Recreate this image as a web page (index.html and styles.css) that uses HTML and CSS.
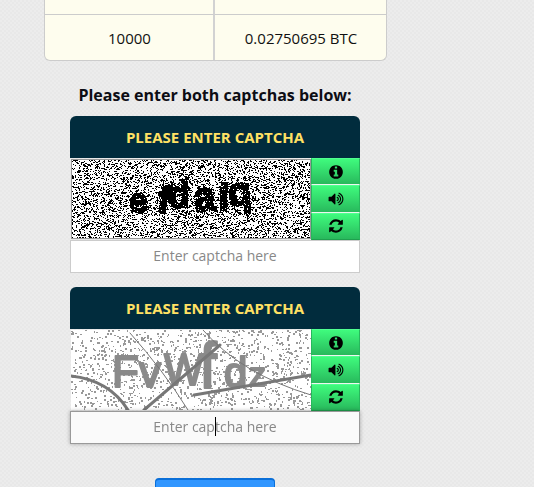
FILE: index.html
```html
<!DOCTYPE html>
<html lang="en">
<head>
    <meta charset="UTF-8">
    <meta name="viewport" content="width=device-width, initial-scale=1.0">
    <title>Enter captchas</title>
    <link rel="stylesheet" href="styles.css">
</head>
<body>

    <div class="content">
        <table class="rates">
            <tr class="cut-row">
                <td></td>
                <td></td>
            </tr>
            <tr>
                <td>10000</td>
                <td>0.02750695 BTC</td>
            </tr>
        </table>

        <h3 class="captcha-title">Please enter both captchas below:</h3>

        <div class="captcha-box">
            <div class="captcha-head">PLEASE ENTER CAPTCHA</div>
            <div class="captcha-body">
                <canvas id="captchaOne" class="captcha-img bordered" width="240" height="80"></canvas>
                <div class="captcha-btns">
                    <button class="captcha-btn">
                        <svg viewBox="0 0 1792 1792"><path d="M1152 1376v-160q0-14-9-23t-23-9h-96v-512q0-14-9-23t-23-9h-320q-14 0-23 9t-9 23v160q0 14 9 23t23 9h96v320h-96q-14 0-23 9t-9 23v160q0 14 9 23t23 9h448q14 0 23-9t9-23zm-128-896v-160q0-14-9-23t-23-9h-192q-14 0-23 9t-9 23v160q0 14 9 23t23 9h192q14 0 23-9t9-23zm640 416q0 209-103 385.500t-279.500 279.500-385.500 103-385.500-103-279.500-279.500-103-385.500 103-385.500 279.500-279.500 385.500-103 385.500 103 279.500 279.500 103 385.500z"/></svg>
                    </button>
                    <button class="captcha-btn">
                        <svg viewBox="0 0 1792 1792"><path d="M832 352v1088q0 26-19 45t-45 19-45-19l-333-333h-262q-26 0-45-19t-19-45v-384q0-26 19-45t45-19h262l333-333q19-19 45-19t45 19 19 45zm384 544q0 76-42.500 141.500t-112.500 93.500q-10 5-25 5-26 0-45-18.500t-19-45.500q0-21 12-35.500t29-25 34-23 29-36 12-56.500-12-56.500-29-36-34-23-29-25-12-35.500q0-27 19-45.500t45-18.500q15 0 25 5 70 27 112.500 93t42.500 142zm256 0q0 153-85 282.500t-225 188.500q-13 5-25 5-27 0-46-19t-19-45q0-39 39-59 56-29 76-44 74-54 115.500-135.500t41.500-173.500-41.500-173.500-115.500-135.500q-20-15-76-44-39-20-39-59 0-26 19-45t45-19q13 0 26 5 140 59 225 188.500t85 282.500zm256 0q0 230-127 422.500t-338 283.500q-13 5-26 5-26 0-45-19t-19-45q0-36 39-59 7-4 22.500-10.500t22.500-10.500q46-25 82-51 123-91 192-227t69-289-69-289-192-227q-36-26-82-51-7-4-22.500-10.500t-22.500-10.500q-39-23-39-59 0-26 19-45t45-19q13 0 26 5 211 91 338 283.500t127 422.500z"/></svg>
                    </button>
                    <button class="captcha-btn">
                        <svg viewBox="0 0 1792 1792"><path d="M1639 1056q0 5-1 7-64 268-268 434.500t-478 166.500q-146 0-282.500-55t-243.500-157l-129 129q-19 19-45 19t-45-19-19-45v-448q0-26 19-45t45-19h448q26 0 45 19t19 45-19 45l-137 137q71 66 161 102t187 36q134 0 250-65t186-179q11-17 53-117 8-23 30-23h192q13 0 22.500 9.500t9.500 22.500zm25-800v448q0 26-19 45t-45 19h-448q-26 0-45-19t-19-45 19-45l138-138q-148-137-349-137-134 0-250 65t-186 179q-11 17-53 117-8 23-30 23h-199q-13 0-22.500-9.500t-9.500-22.500v-7q65-268 270-434.500t480-166.500q146 0 284 55.500t245 156.500l130-129q19-19 45-19t45 19 19 45z"/></svg>
                    </button>
                </div>
            </div>
            <div class="captcha-field">
                <input class="captcha-input" type="text" placeholder="Enter captcha here">
            </div>
        </div>

        <div class="captcha-box second">
            <div class="captcha-head">PLEASE ENTER CAPTCHA</div>
            <div class="captcha-body">
                <canvas id="captchaTwo" class="captcha-img" width="240" height="80"></canvas>
                <div class="captcha-btns">
                    <button class="captcha-btn">
                        <svg viewBox="0 0 1792 1792"><path d="M1152 1376v-160q0-14-9-23t-23-9h-96v-512q0-14-9-23t-23-9h-320q-14 0-23 9t-9 23v160q0 14 9 23t23 9h96v320h-96q-14 0-23 9t-9 23v160q0 14 9 23t23 9h448q14 0 23-9t9-23zm-128-896v-160q0-14-9-23t-23-9h-192q-14 0-23 9t-9 23v160q0 14 9 23t23 9h192q14 0 23-9t9-23zm640 416q0 209-103 385.500t-279.500 279.500-385.500 103-385.500-103-279.500-279.500-103-385.500 103-385.500 279.500-279.500 385.500-103 385.500 103 279.500 279.500 103 385.500z"/></svg>
                    </button>
                    <button class="captcha-btn">
                        <svg viewBox="0 0 1792 1792"><path d="M832 352v1088q0 26-19 45t-45 19-45-19l-333-333h-262q-26 0-45-19t-19-45v-384q0-26 19-45t45-19h262l333-333q19-19 45-19t45 19 19 45zm384 544q0 76-42.500 141.500t-112.500 93.500q-10 5-25 5-26 0-45-18.500t-19-45.500q0-21 12-35.500t29-25 34-23 29-36 12-56.500-12-56.500-29-36-34-23-29-25-12-35.500q0-27 19-45.500t45-18.500q15 0 25 5 70 27 112.500 93t42.500 142zm256 0q0 153-85 282.500t-225 188.500q-13 5-25 5-27 0-46-19t-19-45q0-39 39-59 56-29 76-44 74-54 115.500-135.500t41.500-173.500-41.500-173.500-115.500-135.500q-20-15-76-44-39-20-39-59 0-26 19-45t45-19q13 0 26 5 140 59 225 188.500t85 282.500zm256 0q0 230-127 422.500t-338 283.500q-13 5-26 5-26 0-45-19t-19-45q0-36 39-59 7-4 22.500-10.500t22.500-10.500q46-25 82-51 123-91 192-227t69-289-69-289-192-227q-36-26-82-51-7-4-22.500-10.500t-22.500-10.500q-39-23-39-59 0-26 19-45t45-19q13 0 26 5 211 91 338 283.500t127 422.500z"/></svg>
                    </button>
                    <button class="captcha-btn">
                        <svg viewBox="0 0 1792 1792"><path d="M1639 1056q0 5-1 7-64 268-268 434.500t-478 166.500q-146 0-282.500-55t-243.500-157l-129 129q-19 19-45 19t-45-19-19-45v-448q0-26 19-45t45-19h448q26 0 45 19t19 45-19 45l-137 137q71 66 161 102t187 36q134 0 250-65t186-179q11-17 53-117 8-23 30-23h192q13 0 22.500 9.500t9.500 22.500zm25-800v448q0 26-19 45t-45 19h-448q-26 0-45-19t-19-45 19-45l138-138q-148-137-349-137-134 0-250 65t-186 179q-11 17-53 117-8 23-30 23h-199q-13 0-22.500-9.500t-9.500-22.500v-7q65-268 270-434.500t480-166.500q146 0 284 55.500t245 156.500l130-129q19-19 45-19t45 19 19 45z"/></svg>
                    </button>
                </div>
            </div>
            <div class="captcha-field focused">
                <input class="captcha-input" type="text" placeholder="Enter captcha here">
                <span class="caret"></span>
            </div>
        </div>

        <button class="submit-btn"></button>
    </div>

    <script src="captcha.js"></script>
</body>
</html>
```

FILE: styles.css
```css
html, body {
    height: 100%;
    overflow: hidden;
}
body {
    margin: 0;
    font-family: "Open Sans", Arial, sans-serif;
    color: #111;
    background-color: #ebebeb;
    background-image: repeating-conic-gradient(#e8e8e8 0 25%, #ececec 0 50%);
    background-size: 4px 4px;
}
.content {
    width: 430px;
    display: flex;
    flex-direction: column;
    align-items: center;
}
.rates {
    width: 343px;
    border-collapse: separate;
    border-spacing: 0;
    background-color: #fefdee;
    border: 1px solid #ccc;
    border-top: none;
    border-radius: 0 0 6px 6px;
    font-size: 15px;
    text-align: center;
}
.rates td {
    height: 45px;
    padding: 0 0 0 2px;
    border-right: 2px solid #d2d2d2;
}
.rates td:last-child {
    border-right: none;
}
.rates td:first-child {
    width: 166px;
}
.rates .cut-row td {
    height: 14px;
    border-bottom: 1px solid #ccc;
}
.captcha-title {
    margin: 22px 0 9px;
    font-size: 16px;
    line-height: 24px;
    font-weight: 700;
    color: #0d0d14;
}
.captcha-box {
    width: 290px;
}
.captcha-box.second {
    margin-top: 14px;
}
.captcha-head {
    height: 42px;
    line-height: 43px;
    border-radius: 6px 6px 0 0;
    background-color: #012c3d;
    color: #ffe164;
    font-size: 15px;
    font-weight: 700;
    text-align: center;
}
.captcha-body {
    display: flex;
    justify-content: space-between;
    height: 82px;
}
.captcha-img {
    display: block;
    width: 240px;
    height: 80px;
    margin: 1px 0 1px 1px;
    background: #fff;
}
.captcha-img.bordered {
    outline: 1px solid #999;
    outline-offset: -1px;
}
.captcha-btns {
    display: flex;
    flex-direction: column;
    width: 49px;
}
.captcha-btn {
    flex: 1;
    display: flex;
    align-items: center;
    justify-content: center;
    padding: 0;
    border: 1px solid #26b85c;
    border-top: 1px solid #50ff90;
    border-bottom-color: #eef5ef;
    background: linear-gradient(#3ffb7d, #28b95c);
}
.captcha-btn:last-child {
    border-bottom-color: #1fa04e;
}
.captcha-btn svg {
    width: 16px;
    height: 16px;
    fill: #000;
}
.captcha-field {
    position: relative;
}
.captcha-input {
    display: block;
    box-sizing: border-box;
    width: 100%;
    height: 33px;
    padding: 0 10px 2px 10px;
    border: 1px solid #ccc;
    border-radius: 0;
    outline: none;
    background: #fff;
    font-family: inherit;
    font-size: 14px;
    text-align: center;
}
.captcha-input::placeholder {
    color: #888;
    opacity: 1;
}
.captcha-field.focused .captcha-input {
    border-color: #999;
    background: #fafafa;
    box-shadow: 0 0 4px rgba(0,0,0,0.3);
}
.caret {
    position: absolute;
    left: 145px;
    top: 6px;
    width: 1px;
    height: 19px;
    background: #000;
}
.submit-btn {
    flex: none;
    width: 120px;
    height: 40px;
    margin-top: 34px;
    border: 1px solid #0a6fd8;
    border-top: 2px solid #0a6fd8;
    border-radius: 4px;
    background: #3196ff;
}
```

FILE: captcha.js
```js
// small seeded random so the noise stays the same between loads
function seeded(seed) {
    return function () {
        seed = (seed + 0x6D2B79F5) | 0;
        let t = Math.imul(seed ^ (seed >>> 15), 1 | seed);
        t = (t + Math.imul(t ^ (t >>> 7), 61 | t)) ^ t;
        return ((t ^ (t >>> 14)) >>> 0) / 4294967296;
    };
}

function drawLetters(ctx, letters, stroke) {
    ctx.textBaseline = 'alphabetic';
    ctx.lineWidth = stroke;
    ctx.lineJoin = 'round';
    for (let l of letters) {
        ctx.save();
        ctx.translate(l.x, l.y);
        ctx.rotate(l.r * Math.PI / 180);
        ctx.scale(l.sx || 1, 1);
        ctx.font = l.font;
        ctx.fillText(l.c, 0, 0);
        ctx.strokeText(l.c, 0, 0);
        ctx.restore();
    }
}

function drawFirst() {
    const canvas = document.getElementById('captchaOne');
    const ctx = canvas.getContext('2d', { willReadFrequently: true });
    const w = canvas.width, h = canvas.height;
    const rand = seeded(7741);
    const big = 'bold 38px "Liberation Sans", sans-serif';

    ctx.fillStyle = '#fff';
    ctx.fillRect(0, 0, w, h);
    ctx.fillStyle = '#000';
    ctx.strokeStyle = '#000';
    drawLetters(ctx, [
        { c: 'e', x: 59, y: 54, r: -4, font: 'bold 35px "Liberation Sans", sans-serif', sx: 0.95 },
        { c: 'f', x: 85, y: 53, r: 8, font: big },
        { c: 'd', x: 98, y: 49, r: -2, font: big, sx: 0.9 },
        { c: 'a', x: 124, y: 53, r: -6, font: 'bold 42px "Liberation Sans", sans-serif', sx: 0.9 },
        { c: 'l', x: 147, y: 51, r: 2, font: big },
        { c: 'q', x: 158, y: 47, r: -4, font: 'bold 40px "Liberation Sans", sans-serif', sx: 0.95 }
    ], 2);

    const img = ctx.getImageData(0, 0, w, h);
    const cells = new Uint8Array(w * h);
    for (let y = 0; y < h; y++) {
        for (let x = 0; x < w; x++) {
            const i = (y * w + x) * 4;
            const inLetter = img.data[i] < 128;
            const on = rand() < (inLetter ? 0.95 : 0.28);
            if (on) {
                cells[y * w + x] = 1;
                // some of the dots are wider than one pixel
                if (rand() < 0.2 && x + 1 < w) cells[y * w + x + 1] = 1;
            }
        }
    }
    for (let i = 0; i < cells.length; i++) {
        const v = cells[i] ? 0 : 255;
        img.data[i * 4] = v;
        img.data[i * 4 + 1] = v;
        img.data[i * 4 + 2] = v;
        img.data[i * 4 + 3] = 255;
    }
    ctx.putImageData(img, 0, 0);
}

function drawSecond() {
    const canvas = document.getElementById('captchaTwo');
    const ctx = canvas.getContext('2d');
    const w = canvas.width, h = canvas.height;
    const rand = seeded(2093);
    const reg = '"Liberation Sans", sans-serif';

    ctx.fillStyle = '#fff';
    ctx.fillRect(0, 0, w, h);

    // sparse grey dots, not on a grid
    ctx.fillStyle = '#999';
    for (let n = 0; n < 1300; n++) {
        const x = Math.floor(rand() * w);
        const y = Math.floor(rand() * h);
        ctx.fillRect(x, y, rand() < 0.6 ? 2 : 1, rand() < 0.6 ? 2 : 1);
    }

    ctx.fillStyle = '#8a8a8a';
    ctx.strokeStyle = '#8a8a8a';
    drawLetters(ctx, [
        { c: 'F', x: 41, y: 57, r: 0, font: '44px ' + reg },
        { c: 'v', x: 68, y: 57, r: 0, font: '44px ' + reg },
        { c: 'W', x: 93, y: 55, r: 0, font: '44px ' + reg, sx: 0.95 },
        { c: 'f', x: 128, y: 58, r: 0, font: '64px ' + reg },
        { c: 'd', x: 153, y: 57, r: 0, font: '42px ' + reg },
        { c: 'z', x: 178, y: 56, r: 0, font: '34px ' + reg }
    ], 2);

    ctx.strokeStyle = '#777';
    ctx.lineCap = 'round';

    ctx.lineWidth = 3;
    ctx.beginPath();
    ctx.moveTo(0, 46);
    ctx.quadraticCurveTo(38, 50, 57, 80);
    ctx.stroke();

    ctx.beginPath();
    ctx.moveTo(73, 80);
    ctx.lineTo(149, 15);
    ctx.stroke();

    ctx.beginPath();
    ctx.moveTo(123, 65);
    ctx.lineTo(240, 45);
    ctx.stroke();

    ctx.lineWidth = 1;
    ctx.beginPath();
    ctx.moveTo(59, 3);
    ctx.quadraticCurveTo(92, 40, 117, 80);
    ctx.stroke();

    ctx.beginPath();
    ctx.moveTo(132, 0);
    ctx.quadraticCurveTo(170, 44, 240, 65);
    ctx.stroke();
}

drawFirst();
drawSecond();
```
